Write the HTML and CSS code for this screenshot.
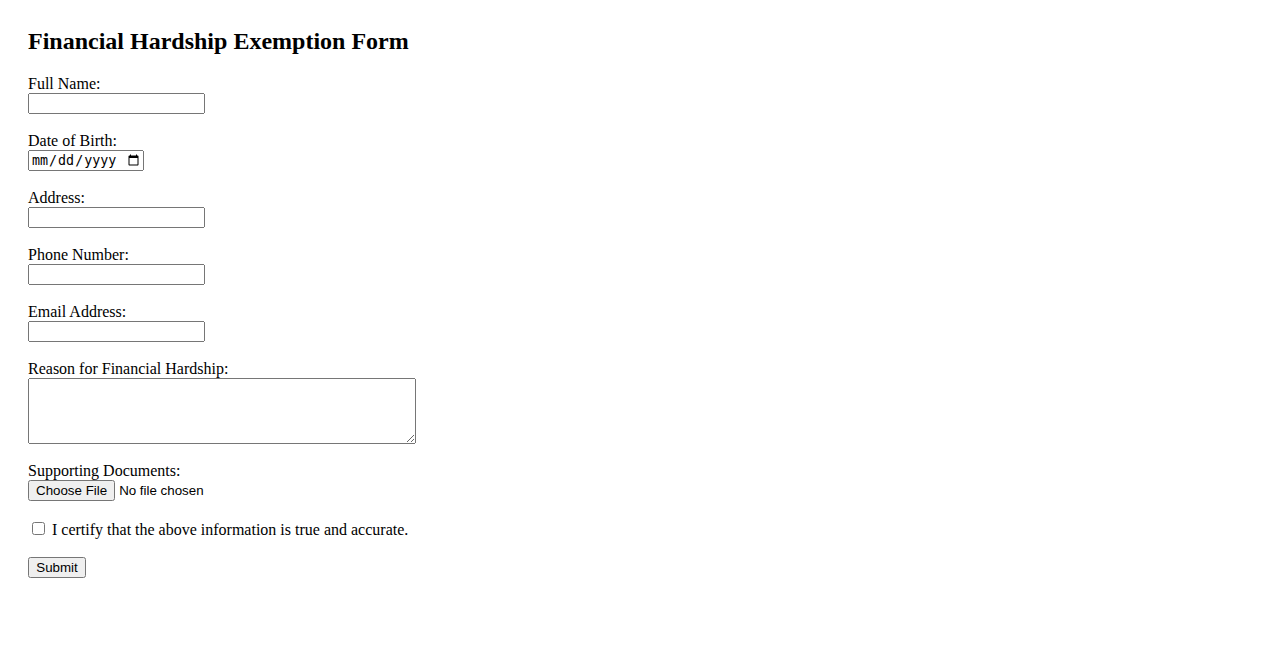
FILE: index.html
```html
<!DOCTYPE html>
<html lang="en">
  <head>
    <meta charset="UTF-8" />
    <meta name="viewport" content="width=device-width, initial-scale=1.0" />
    <title>Financial Hardship Exemption Form</title>
    <link rel="stylesheet" href="styles.css">
  </head>
  <body>
    <h2>Financial Hardship Exemption Form</h2>
    <form>
      <label for="name">Full Name:</label><br>
      <input type="text" id="name" name="name"><br><br>

      <label for="dob">Date of Birth:</label><br>
      <input type="date" id="dob" name="dob"><br><br>

      <label for="address">Address:</label><br>
      <input type="text" id="address" name="address"><br><br>

      <label for="phone">Phone Number:</label><br>
      <input type="tel" id="phone" name="phone"><br><br>

      <label for="email">Email Address:</label><br>
      <input type="email" id="email" name="email"><br><br>

      <label for="reason">Reason for Financial Hardship:</label><br>
      <textarea id="reason" name="reason" rows="4" cols="50"></textarea><br><br>

      <label for="documents">Supporting Documents:</label><br>
      <input type="file" id="documents" name="documents"><br><br>

      <input type="checkbox" id="certify" name="certify">
      <label for="certify">I certify that the above information is true and accurate.</label><br><br>

      <input type="submit" value="Submit">
    </form>
  </body>
</html>
```

FILE: styles.css
```css
body {
  margin: 0;
  padding: 28px;
  font-family: "Liberation Serif", "Times New Roman", serif;
}
h2 {
  margin: 0 0 20px;
}
input[type="text"],
input[type="tel"],
input[type="email"] {
  width: 177px;
  box-sizing: border-box;
}
input[type="date"] {
  width: 116px;
  box-sizing: border-box;
}
textarea {
  width: 388px;
  height: 66px;
  box-sizing: border-box;
  vertical-align: top;
}
input[type="file"],
input[type="submit"] {
  font-family: "Liberation Sans", Arial, sans-serif;
  font-size: 13.33px;
}
input[type="submit"] {
  height: 21px;
  width: 58px;
  box-sizing: border-box;
}
```
